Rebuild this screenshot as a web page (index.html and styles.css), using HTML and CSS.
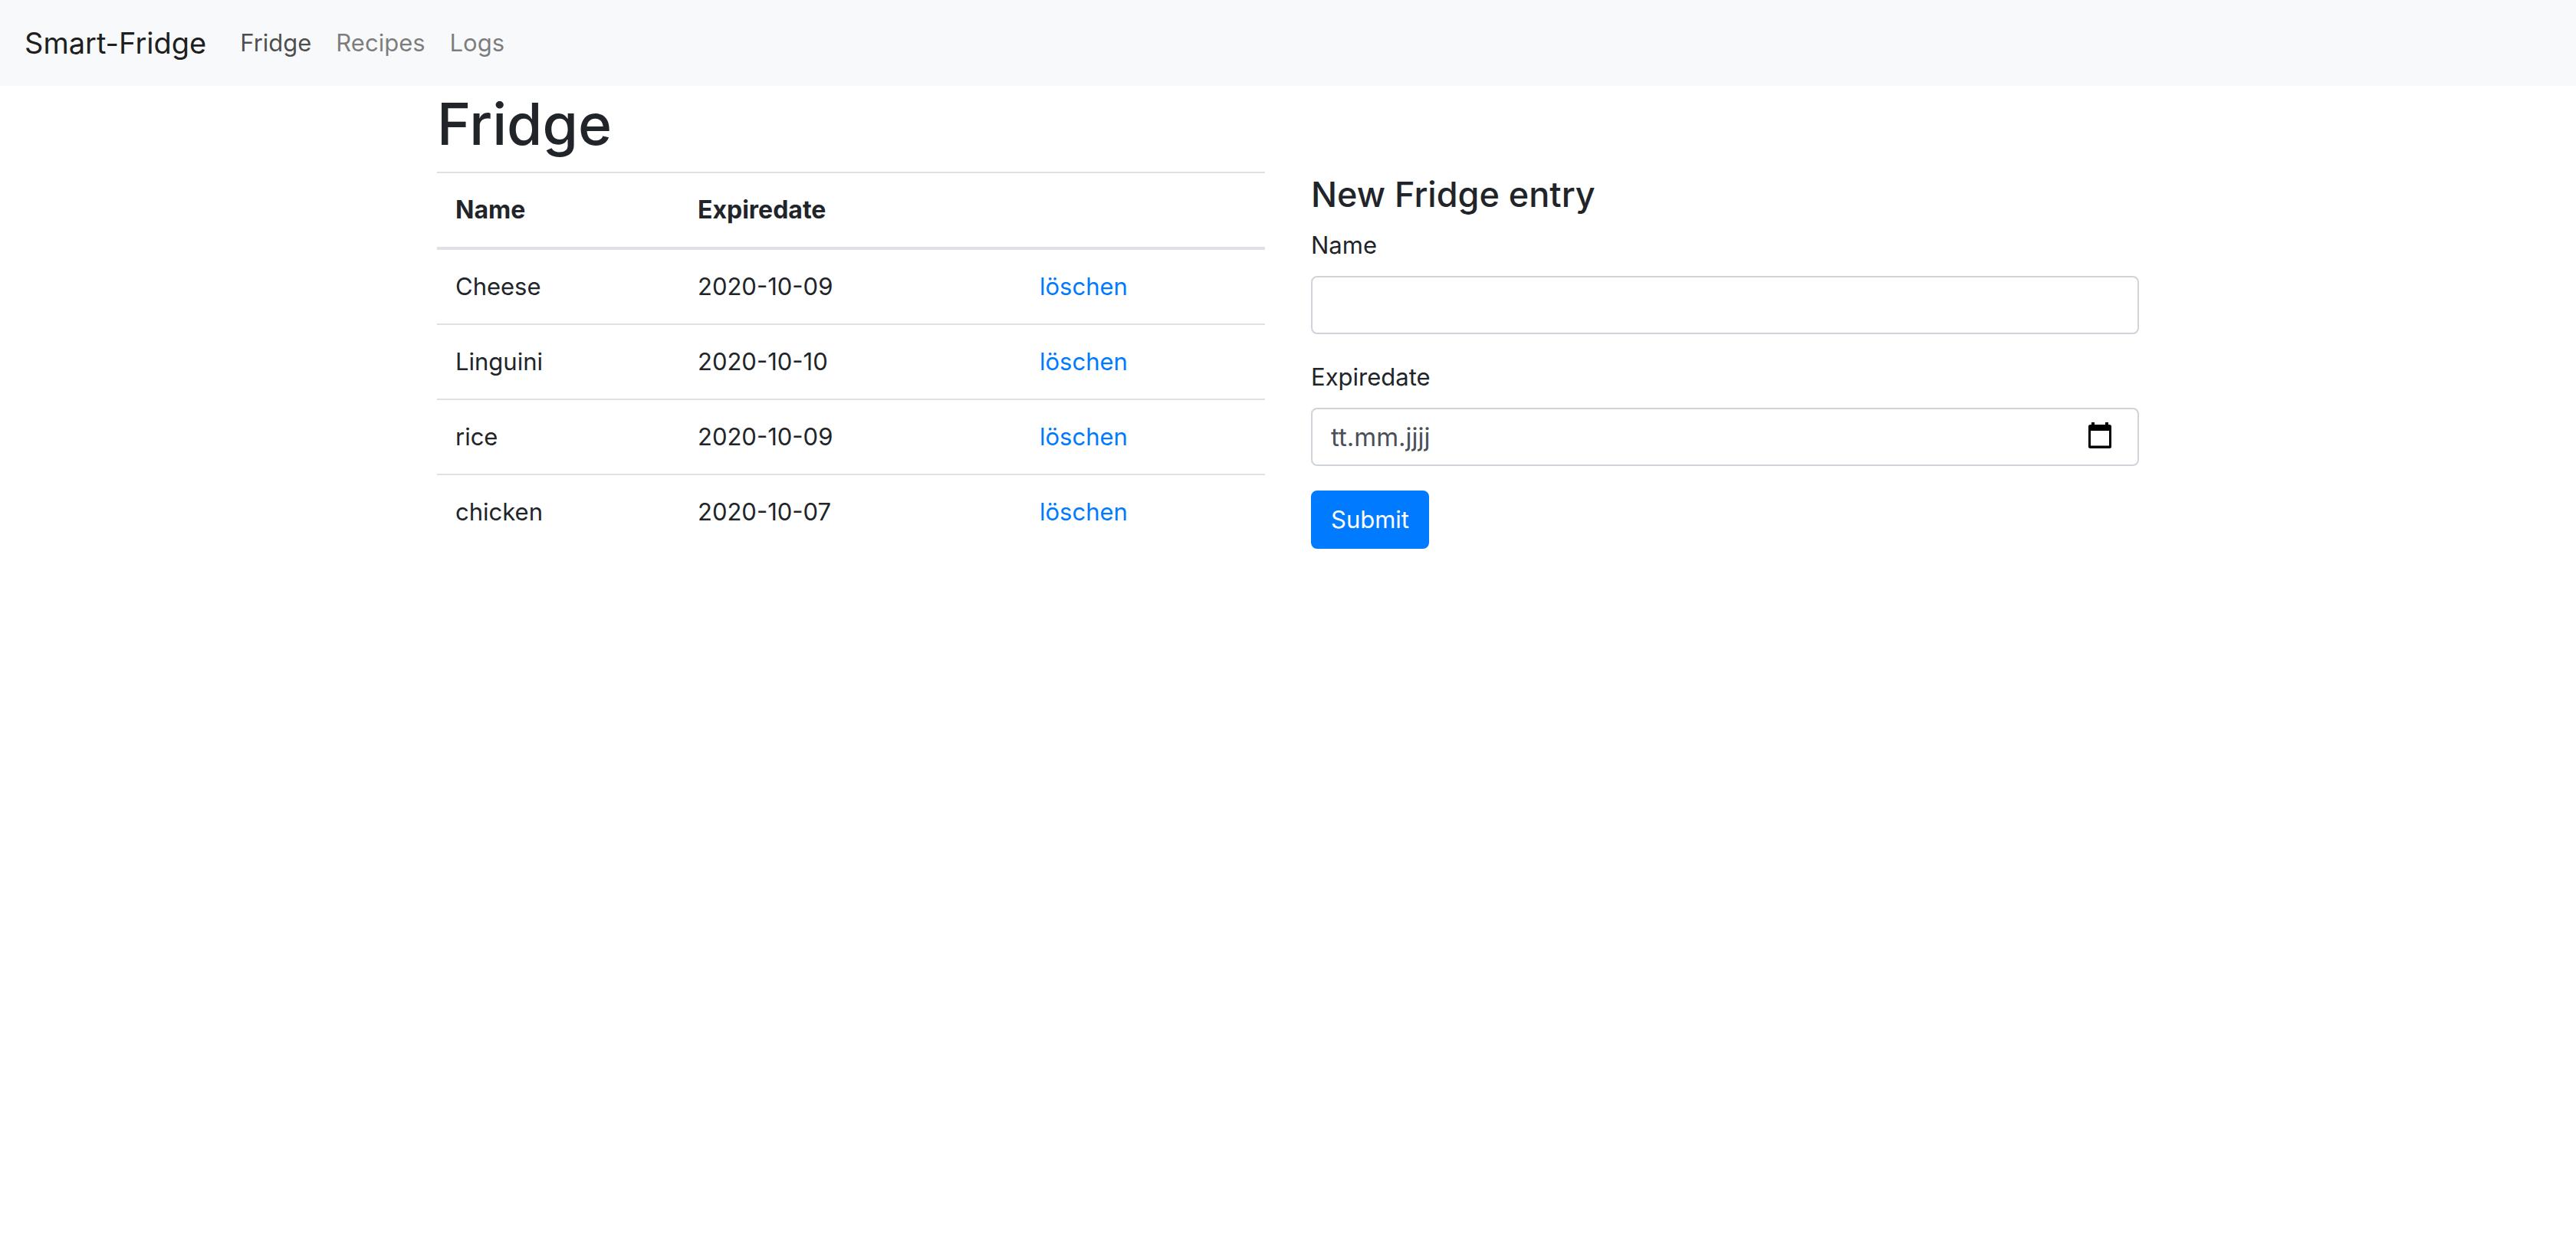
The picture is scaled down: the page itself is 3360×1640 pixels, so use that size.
FILE: index.html
```html
<!DOCTYPE html>
<html lang="de">
<head>
<meta charset="utf-8">
<title>Smart-Fridge</title>
<link rel="stylesheet" href="styles.css">
</head>
<body>
<nav class="navbar">
  <a class="navbar-brand" href="#">Smart-Fridge</a>
  <ul class="navbar-nav">
    <li><a class="nav-link active" href="#">Fridge</a></li>
    <li><a class="nav-link" href="#">Recipes</a></li>
    <li><a class="nav-link" href="#">Logs</a></li>
  </ul>
</nav>
<main class="container">
  <h1 class="title">Fridge</h1>
  <div class="row">
    <table class="table">
      <colgroup><col class="col-name"><col class="col-date"><col></colgroup>
      <thead>
        <tr><th scope="col">Name</th><th scope="col">Expiredate</th><td></td></tr>
      </thead>
      <tbody>
        <tr><td>Cheese</td><td>2020-10-09</td><td><a class="link" href="#">löschen</a></td></tr>
        <tr><td>Linguini</td><td>2020-10-10</td><td><a class="link" href="#">löschen</a></td></tr>
        <tr><td>rice</td><td>2020-10-09</td><td><a class="link" href="#">löschen</a></td></tr>
        <tr><td>chicken</td><td>2020-10-07</td><td><a class="link" href="#">löschen</a></td></tr>
      </tbody>
    </table>
    <form class="form">
      <h4 class="form-title">New Fridge entry</h4>
      <div class="form-group">
        <label class="label" for="name">Name</label>
        <input class="form-control" type="text" id="name">
      </div>
      <div class="form-group">
        <label class="label" for="expiredate">Expiredate</label>
        <div class="date-field">
          <input class="form-control date-input" type="text" id="expiredate" placeholder="tt.mm.jjjj">
          <button class="picker" type="button" aria-label="Kalender">
            <svg class="picker-icon" viewBox="0 0 30 34"><path fill-rule="evenodd" d="M4 0h4v3h14V0h4v3h1.500a2.500 2.500 0 0 1 2.500 2.500v26a2.500 2.500 0 0 1-2.500 2.500h-25A2.500 2.500 0 0 1 0 31.500v-26A2.500 2.500 0 0 1 2.500 3H4zM3 11v19.500h24V11z"/></svg>
          </button>
        </div>
      </div>
      <button class="btn" type="submit">Submit</button>
    </form>
  </div>
</main>
</body>
</html>
```
FILE: styles.css
```css
* { box-sizing: border-box; }

body {
  margin: 0;
  background: #fff;
  color: #212529;
  font: 400 31px/48px Inter, "Liberation Sans", sans-serif;
}

a { text-decoration: none; }

.navbar {
  display: flex;
  align-items: center;
  gap: 28px;
  padding: 16px 32px;
  background: #f8f9fa;
}

.navbar-brand {
  padding: 10px 0;
  color: rgba(0, 0, 0, .9);
  font-size: 38px;
  line-height: 60px;
}

.navbar-nav {
  display: flex;
  margin: 0;
  padding: 0;
  list-style: none;
}

.nav-link {
  display: block;
  padding: 16px;
  color: rgba(0, 0, 0, .5);
}

.nav-link.active { color: rgba(0, 0, 0, .7); }

.container {
  max-width: 2280px;
  margin: 0 auto;
  padding: 0 30px;
}

.title {
  margin: 0 0 12px;
  font-size: 75px;
  font-weight: 500;
  line-height: 100px;
}

.row {
  display: grid;
  grid-template-columns: 1fr 1fr;
  gap: 60px;
  align-items: start;
}

.table {
  width: 100%;
  border-collapse: collapse;
  table-layout: fixed;
}

.col-name { width: 316px; }
.col-date { width: 446px; }

.table th,
.table td {
  padding: 24px;
  border-top: 2px solid #dee2e6;
  text-align: left;
}

.table th {
  font-size: 32px;
  font-weight: 700;
}

.table thead th,
.table thead td { border-bottom: 4px solid #dee2e6; }

.link { color: #007bff; }

.form-title {
  margin: 0 0 12px;
  font-size: 45px;
  font-weight: 500;
  line-height: 60px;
}

.form-group { margin-bottom: 32px; }

.label {
  display: block;
  margin-bottom: 16px;
}

.form-control {
  display: block;
  width: 100%;
  height: 76px;
  padding: 12px 24px;
  border: 2px solid #ced4da;
  border-radius: 8px;
  background: #fff;
  color: #495057;
  font: inherit;
}

.form-control::placeholder {
  color: #495057;
  opacity: 1;
}

.date-input { font-size: 33px; }

.date-field { position: relative; }

.picker {
  position: absolute;
  top: 19px;
  right: 36px;
  display: flex;
  padding: 0;
  border: 0;
  background: none;
}

.picker-icon {
  width: 30px;
  height: 34px;
}

.btn {
  padding: 12px 24px;
  border: 2px solid #007bff;
  border-radius: 8px;
  background: #007bff;
  color: #fff;
  font: inherit;
}
```
